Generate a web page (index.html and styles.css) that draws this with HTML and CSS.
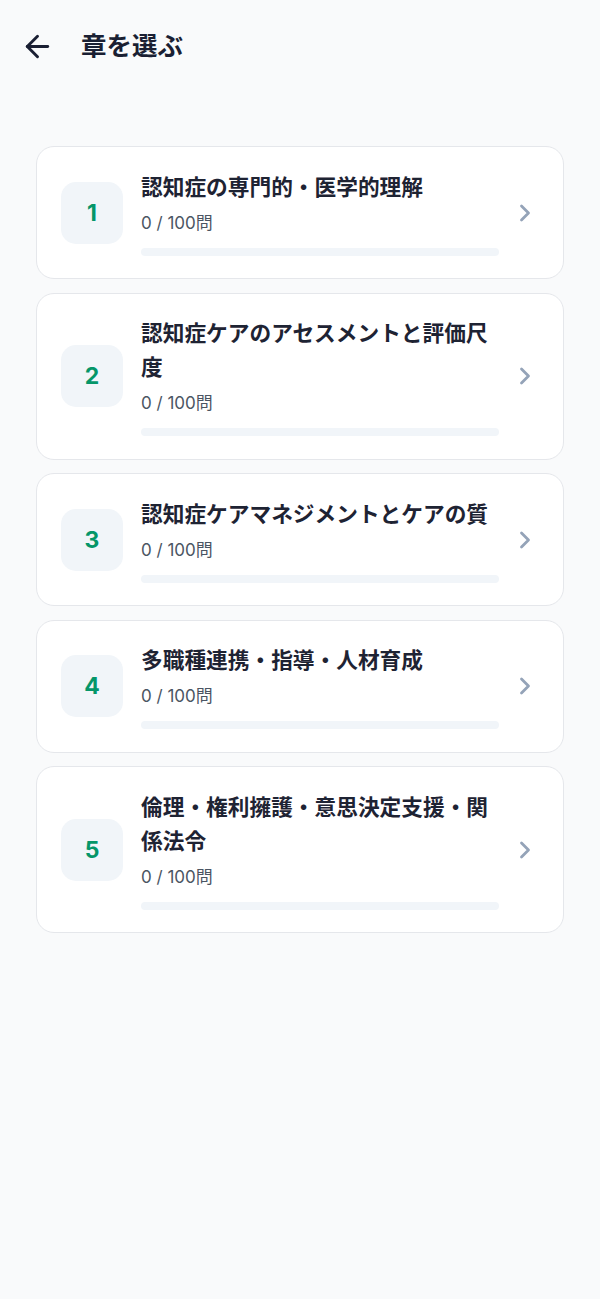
FILE: index.html
```html
<!DOCTYPE html>
<html lang="ja">
<head>
<meta charset="utf-8">
<meta name="viewport" content="width=device-width, initial-scale=1">
<title>章を選ぶ</title>
<link rel="stylesheet" href="styles.css">
</head>
<body>
<header class="header">
  <button class="back" aria-label="戻る">
    <svg viewBox="0 0 24 24" width="35" height="35" fill="none" stroke="currentColor" stroke-width="2" stroke-linecap="round" stroke-linejoin="round"><path d="m12 19-7-7 7-7"/><path d="M19 12H5"/></svg>
  </button>
  <h1 class="title">章を選ぶ</h1>
</header>
<main class="list">
  <a class="card" href="#">
    <div class="num">1</div>
    <div class="body">
      <div class="name">認知症の専門的・医学的理解</div>
      <div class="count">0 / 100問</div>
      <div class="bar"><div class="fill" style="width:0%"></div></div>
    </div>
    <svg class="chev" viewBox="0 0 24 24" width="28" height="28" fill="none" stroke="currentColor" stroke-width="2.4" stroke-linecap="round" stroke-linejoin="round"><path d="m9 18 6-6-6-6"/></svg>
  </a>
  <a class="card" href="#">
    <div class="num">2</div>
    <div class="body">
      <div class="name">認知症ケアのアセスメントと評価尺度</div>
      <div class="count">0 / 100問</div>
      <div class="bar"><div class="fill" style="width:0%"></div></div>
    </div>
    <svg class="chev" viewBox="0 0 24 24" width="28" height="28" fill="none" stroke="currentColor" stroke-width="2.4" stroke-linecap="round" stroke-linejoin="round"><path d="m9 18 6-6-6-6"/></svg>
  </a>
  <a class="card" href="#">
    <div class="num">3</div>
    <div class="body">
      <div class="name">認知症ケアマネジメントとケアの質</div>
      <div class="count">0 / 100問</div>
      <div class="bar"><div class="fill" style="width:0%"></div></div>
    </div>
    <svg class="chev" viewBox="0 0 24 24" width="28" height="28" fill="none" stroke="currentColor" stroke-width="2.4" stroke-linecap="round" stroke-linejoin="round"><path d="m9 18 6-6-6-6"/></svg>
  </a>
  <a class="card" href="#">
    <div class="num">4</div>
    <div class="body">
      <div class="name">多職種連携・指導・人材育成</div>
      <div class="count">0 / 100問</div>
      <div class="bar"><div class="fill" style="width:0%"></div></div>
    </div>
    <svg class="chev" viewBox="0 0 24 24" width="28" height="28" fill="none" stroke="currentColor" stroke-width="2.4" stroke-linecap="round" stroke-linejoin="round"><path d="m9 18 6-6-6-6"/></svg>
  </a>
  <a class="card" href="#">
    <div class="num">5</div>
    <div class="body">
      <div class="name">倫理・権利擁護・意思決定支援・関係法令</div>
      <div class="count">0 / 100問</div>
      <div class="bar"><div class="fill" style="width:0%"></div></div>
    </div>
    <svg class="chev" viewBox="0 0 24 24" width="28" height="28" fill="none" stroke="currentColor" stroke-width="2.4" stroke-linecap="round" stroke-linejoin="round"><path d="m9 18 6-6-6-6"/></svg>
  </a>
</main>
</body>
</html>
```

FILE: styles.css
```css
* { box-sizing: border-box; }
html, body { margin: 0; padding: 0; }
body {
  background: #f9fafb;
  font-family: Inter, "Noto Sans CJK JP", "Noto Sans", sans-serif;
  color: #1e2333;
  min-height: 1299px;
}
.header {
  display: flex;
  align-items: center;
  height: 92px;
  padding-left: 20px;
  gap: 26px;
}
.back {
  display: flex;
  align-items: center;
  justify-content: center;
  padding: 0;
  border: 0;
  background: none;
  color: #1a1f33;
  width: 35px;
  height: 35px;
}
.back svg { display: block; }
.title {
  margin: 0;
  font-size: 25.5px;
  font-weight: 700;
  line-height: 34px;
  color: #1a1f33;
}
.list {
  display: flex;
  flex-direction: column;
  gap: 13.5px;
  padding: 54px 36px 0;
}
.card {
  display: flex;
  align-items: center;
  background: #ffffff;
  border: 1px solid #e5e7eb;
  border-radius: 18px;
  padding: 22.5px 24px;
  text-decoration: none;
  color: inherit;
}
.num {
  flex: 0 0 62px;
  height: 62px;
  border-radius: 15px;
  background: #f1f5f9;
  color: #059669;
  font-weight: 700;
  font-size: 23px;
  display: flex;
  align-items: center;
  justify-content: center;
  margin-right: 18px;
}
.body {
  flex: 1;
  min-width: 0;
  display: flex;
  flex-direction: column;
}
.name {
  font-size: 21.7px;
  font-weight: 700;
  line-height: 34px;
  color: #1e2333;
}
.count {
  margin-top: 6px;
  font-size: 17px;
  line-height: 26px;
  color: #4b5563;
}
.bar {
  margin-top: 12px;
  height: 8px;
  border-radius: 999px;
  background: #f1f5f9;
  overflow: hidden;
}
.fill {
  height: 100%;
  background: #059669;
}
.chev {
  flex: 0 0 28px;
  margin-left: 12px;
  color: #94a3b8;
  display: block;
}
```
